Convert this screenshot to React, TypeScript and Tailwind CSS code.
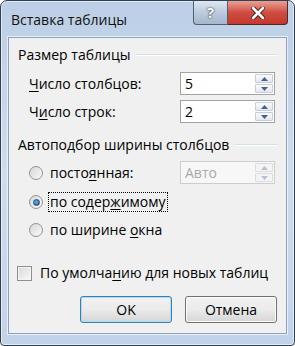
import React from "react";

const U = ({ children }: { children: React.ReactNode }) => (
  <span className="underline decoration-1 underline-offset-[2px]">{children}</span>
);

function Tri({ up, color }: { up?: boolean; color: string }) {
  return (
    <svg width="7" height="4" viewBox="0 0 7 4">
      <polygon points={up ? "0,4 7,4 3.5,0" : "0,0 7,0 3.5,4"} fill={color} />
    </svg>
  );
}

function Spin({ value, disabled }: { value: string; disabled?: boolean }) {
  return (
    <div
      className={`w-[95px] h-[23px] flex items-stretch border p-[1px] ${
        disabled ? "border-[#cdcdcd] bg-[#f7f7f7]" : "border-[#a3a3a3] bg-white"
      }`}
    >
      <div
        className={`flex-1 flex items-center pl-[3px] ${
          disabled ? "text-[#a8a8a8]" : "text-black"
        }`}
      >
        {value}
      </div>
      <div className="w-[18px] flex flex-col gap-[1px]">
        <div
          className={`flex-1 flex items-center justify-center border rounded-[1px] ${
            disabled
              ? "border-[#dcdcdc] bg-[#f4f4f4]"
              : "border-[#c5cfda] bg-gradient-to-b from-[#f9fafc] to-[#e3e8ee]"
          }`}
        >
          <Tri up color={disabled ? "#b8c0cc" : "#4a5f86"} />
        </div>
        <div
          className={`flex-1 flex items-center justify-center border rounded-[1px] ${
            disabled
              ? "border-[#dcdcdc] bg-[#f4f4f4]"
              : "border-[#c5cfda] bg-gradient-to-b from-[#f9fafc] to-[#e3e8ee]"
          }`}
        >
          <Tri color={disabled ? "#b8c0cc" : "#4a5f86"} />
        </div>
      </div>
    </div>
  );
}

function Radio({ checked }: { checked?: boolean }) {
  return (
    <div className="w-[14px] h-[14px] rounded-full border border-[#939393] bg-gradient-to-br from-[#d6d6d6] to-[#fbfbfb] flex items-center justify-center shrink-0">
      {checked && (
        <div className="w-[7px] h-[7px] rounded-full bg-[radial-gradient(circle_at_40%_40%,#6cb2e8,#1b5a96)] border border-[#1d4f7c]" />
      )}
    </div>
  );
}

function GroupHeader({ text }: { text: string }) {
  return (
    <div className="h-[18px] flex items-center pl-[9px] pr-[8px]">
      <span>{text}</span>
      <div className="flex-1 ml-[6px] h-[2px] border-t border-[#d5dfe5] border-b border-b-white" />
    </div>
  );
}

export default function App() {
  return (
    <div className="w-[295px] h-[346px] bg-white font-['Open_Sans','Noto_Sans',sans-serif] text-[14px] leading-none text-black">
      <div className="w-[295px] h-[346px] flex flex-col rounded-t-[7px] rounded-b-[4px] border border-[#33404f] bg-gradient-to-b from-[#bccfe6] via-[#cfdcee] to-[#c2d3e9] px-[7px] pb-[11px] shadow-[inset_0_0_0_1px_rgba(255,255,255,0.55)]">
        <div className="h-[36px] flex items-start shrink-0">
          <div className="pt-[12px] pl-[3px] text-[14px] text-[#111]">Вставка таблицы</div>
          <div className="ml-auto mr-[-1px] flex h-[24px]">
            <div className="w-[35px] h-full rounded-bl-[4px] border border-t-0 border-[#4f5f74] bg-gradient-to-b from-[#dfe7f1] via-[#bccbdd] to-[#a6b6cb] flex items-center justify-center text-white font-bold text-[15px] [text-shadow:0_0_2px_#2f3d50,0_0_1px_#2f3d50]">
              ?
            </div>
            <div className="w-[60px] h-full rounded-br-[4px] border border-l-0 border-t-0 border-[#5a2420] bg-gradient-to-b from-[#e7a095] via-[#cf4c40] to-[#c4382c] flex items-center justify-center">
              <svg width="14" height="12" viewBox="0 0 14 12">
                <path d="M2 1 L12 11 M12 1 L2 11" stroke="#4a1a16" strokeWidth="4.5" strokeLinecap="round" />
                <path d="M2 1 L12 11 M12 1 L2 11" stroke="#ffffff" strokeWidth="2.6" strokeLinecap="round" />
              </svg>
            </div>
          </div>
        </div>
        <div className="flex-1 flex flex-col border border-[#8ea2bb] bg-[#f0f0f0] shadow-[0_0_0_1px_rgba(255,255,255,0.6)]">
          <div className="mt-[8px]">
            <GroupHeader text="Размер таблицы" />
          </div>
          <div className="mt-[8px] h-[23px] flex items-center pl-[20px] pr-[11px]">
            <span>
              <U>Ч</U>исло столбцов:
            </span>
            <div className="ml-auto">
              <Spin value="5" />
            </div>
          </div>
          <div className="mt-[5px] h-[23px] flex items-center pl-[20px] pr-[11px]">
            <span>
              Ч<U>и</U>сло строк:
            </span>
            <div className="ml-auto">
              <Spin value="2" />
            </div>
          </div>
          <div className="mt-[13px]">
            <GroupHeader text="Автоподбор ширины столбцов" />
          </div>
          <div className="mt-[7px] h-[23px] flex items-center pl-[20px] pr-[11px]">
            <Radio />
            <span className="ml-[5px] border border-transparent px-[1px] py-[2px]">
              посто<U>я</U>нная:
            </span>
            <div className="ml-auto">
              <Spin value="Авто" disabled />
            </div>
          </div>
          <div className="mt-[8px] h-[20px] flex items-center pl-[20px]">
            <Radio checked />
            <span className="ml-[5px] border border-dotted border-black px-[1px] py-[2px]">
              по содер<U>ж</U>имому
            </span>
          </div>
          <div className="mt-[8px] h-[20px] flex items-center pl-[20px]">
            <Radio />
            <span className="ml-[5px] border border-transparent px-[1px] py-[2px]">
              по ширине <U>о</U>кна
            </span>
          </div>
          <div className="mt-[23px] h-[20px] flex items-center pl-[8px]">
            <div className="w-[15px] h-[15px] border border-[#8f8f8f] bg-gradient-to-br from-[#d8d8d8] to-[#fafafa] shadow-[inset_0_0_0_1px_#f4f4f4] shrink-0" />
            <span className="ml-[8px]">
              По умолча<U>н</U>ию для новых таблиц
            </span>
          </div>
          <div className="mt-[13px] flex justify-end gap-[13px] pr-[9px]">
            <div className="w-[92px] h-[27px] rounded-[3px] border border-[#3c7fb1] shadow-[inset_0_0_0_1px_#a9dcf6] bg-gradient-to-b from-[#f2f2f2] via-[#ebebeb] to-[#d6d6d6] flex items-center justify-center">
              OK
            </div>
            <div className="w-[92px] h-[27px] rounded-[3px] border border-[#707070] shadow-[inset_0_0_0_1px_#fcfcfc] bg-gradient-to-b from-[#f2f2f2] via-[#ebebeb] to-[#d6d6d6] flex items-center justify-center">
              Отмена
            </div>
          </div>
        </div>
      </div>
    </div>
  );
}
